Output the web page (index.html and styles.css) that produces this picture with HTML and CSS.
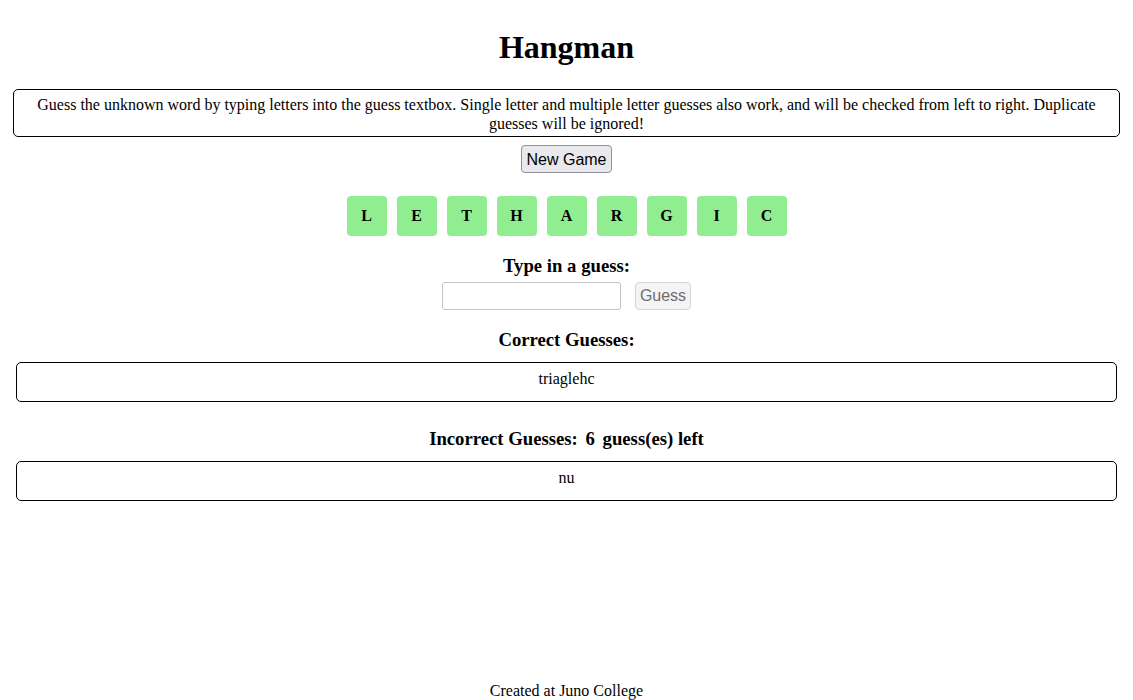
FILE: index.html
```html
<!DOCTYPE html>
<html lang="en">
<head>
<meta charset="utf-8">
<title>Hangman</title>
<link rel="stylesheet" href="styles.css">
</head>
<body>
<div class="page">
  <header class="header">
    <h1 class="title">Hangman</h1>
  </header>
  <main class="main">
    <p class="instructions">Guess the unknown word by typing letters into the guess textbox. Single letter and multiple letter guesses also work, and will be checked from left to right. Duplicate guesses will be ignored!</p>
    <button class="btn new-game" type="button">New Game</button>
    <ul class="tiles">
      <li class="tile">L</li>
      <li class="tile">E</li>
      <li class="tile">T</li>
      <li class="tile">H</li>
      <li class="tile">A</li>
      <li class="tile">R</li>
      <li class="tile">G</li>
      <li class="tile">I</li>
      <li class="tile">C</li>
    </ul>
    <form class="guess-form">
      <label class="section-title guess-label" for="guess">Type in a guess:</label>
      <div class="guess-row">
        <input class="guess-input" id="guess" type="text">
        <button class="btn guess-btn" type="submit" disabled>Guess</button>
      </div>
    </form>
    <h3 class="section-title correct-title">Correct Guesses:</h3>
    <div class="result-box">triaglehc</div>
    <h3 class="section-title incorrect-title">Incorrect Guesses: <span class="count">6</span> guess(es) left</h3>
    <div class="result-box">nu</div>
  </main>
  <footer class="footer">Created at Juno College</footer>
</div>
</body>
</html>
```

FILE: styles.css
```css
html, body {
  margin: 0;
  padding: 0;
  background: #ffffff;
}

body {
  font-family: "Liberation Serif", "Times New Roman", serif;
  font-size: 16px;
  color: #000000;
}

.page {
  min-height: 100vh;
  box-sizing: border-box;
  padding: 0 8px;
  display: flex;
  flex-direction: column;
  align-items: stretch;
  text-align: center;
}

.header {
  display: flex;
  justify-content: center;
}

.title {
  margin: 29px 0 0;
  font-size: 32px;
  font-weight: bold;
  line-height: 36px;
}

.main {
  display: flex;
  flex-direction: column;
  align-items: center;
}

.instructions {
  align-self: stretch;
  margin: 24px 5px 0;
  padding: 5px 10px 3px;
  border: 1px solid #000000;
  border-radius: 5px;
  line-height: 19px;
}

.btn {
  font-family: "Liberation Sans", Arial, sans-serif;
  font-size: 16px;
  line-height: 18px;
  padding: 4px 4px;
  border-radius: 4px;
}

.new-game {
  margin-top: 8px;
  height: 28px;
  padding: 5px 4px 3px;
  background: #e9e9ed;
  border: 1px solid #8f8f9d;
  color: #000000;
}

.tiles {
  list-style: none;
  margin: 23px 0 0;
  padding: 0;
  display: flex;
  gap: 10px;
}

.tile {
  width: 40px;
  height: 40px;
  border-radius: 4px;
  background: #90ee90;
  display: flex;
  align-items: center;
  justify-content: center;
  font-weight: bold;
  font-size: 16px;
}

.guess-form {
  margin-top: 19px;
  display: flex;
  flex-direction: column;
  align-items: center;
}

.section-title {
  display: block;
  font-size: 18.72px;
  font-weight: bold;
  line-height: 22px;
}

.guess-row {
  margin-top: 5px;
  display: flex;
  gap: 14px;
}

.guess-input {
  width: 179px;
  height: 28px;
  box-sizing: border-box;
  border: 1px solid #c3c3c8;
  border-radius: 3px;
  padding: 2px 4px;
  font-size: 16px;
}

.guess-btn {
  height: 28px;
  padding: 4px 4px;
  background: #f4f4f6;
  border: 1px solid #d2d2d8;
  color: #6d6d6d;
}

.correct-title {
  margin: 19px 0 0;
}

.incorrect-title {
  margin: 26px 0 0;
}

.count {
  margin: 0 3px;
}

.result-box {
  align-self: stretch;
  margin: 11px 8px 0;
  box-sizing: border-box;
  height: 40px;
  padding: 7px 10px 0;
  border: 1px solid #000000;
  border-radius: 5px;
  line-height: 18px;
}

.footer {
  margin-top: auto;
  line-height: 18px;
}
```
